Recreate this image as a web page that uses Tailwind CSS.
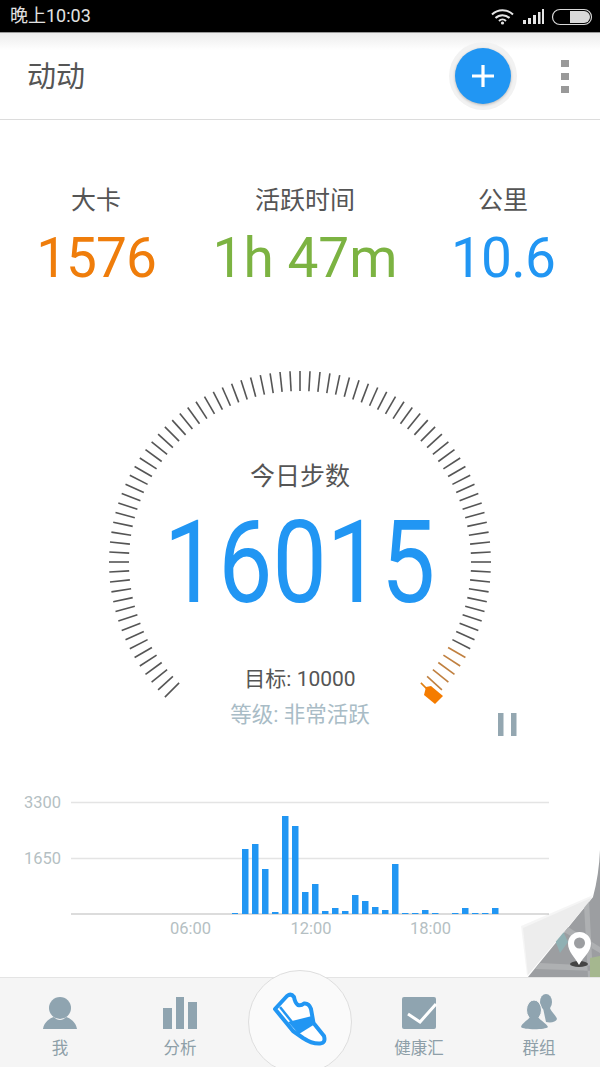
<!doctype html>
<html lang="zh">
<head>
<meta charset="utf-8">
<script src="https://cdn.jsdelivr.net/npm/@tailwindcss/browser@4"></script>
</head>
<body class="m-0 bg-white">
<div class="relative w-[600px] h-[1067px] overflow-hidden flex flex-col bg-white font-['Roboto','Noto_Sans_CJK_SC',sans-serif]">

  <!-- status bar -->
  <div class="h-[33px] shrink-0 bg-black border-b border-[#999] flex items-center justify-between pl-[10px]">
    <span class="text-[18px] text-[#e2e2e2] leading-none">晚上10:03</span>
    <svg width="110" height="24" viewBox="490 4 110 24" fill="none">
      <path d="M492 14.500a15 15 0 0 1 21 0M495.500 18a10 10 0 0 1 14 0M499 21a5 5 0 0 1 7 0" stroke="#e6e6e6" stroke-width="2"/>
      <circle cx="502.500" cy="23" r="1.600" fill="#e6e6e6"/>
      <path d="M523 20h3v4h-3zM528 18h3v6h-3zM533 15h3v9h-3zM538 12h2.500v12H538zM542 9h2v15h-2z" fill="#e6e6e6"/>
      <rect x="552.500" y="9.500" width="39" height="15" rx="7.500" stroke="#d8d8d8" stroke-width="1.200"/>
      <path d="M570 11h14a6 6 0 0 1 0 12h-14z" fill="#d8d8d8"/>
    </svg>
  </div>

  <!-- header -->
  <header class="relative h-[87px] shrink-0 border-b border-[#dcdcdc] bg-linear-to-b from-[#ececec] via-white via-[20%] to-white flex items-center pl-[27px] pr-[31px]">
    <h1 class="text-[29px] leading-none text-[#555] font-normal mt-[3px]">动动</h1>
    <div class="ml-auto mr-[44px] w-[68px] h-[68px] rounded-full bg-[#f2f2f2] flex items-center justify-center">
      <div class="w-[56px] h-[56px] rounded-full bg-[#2196f3] shadow-[0_1px_3px_rgba(0,0,0,0.25)] flex items-center justify-center">
        <svg width="24" height="24" viewBox="0 0 24 24"><path d="M12 1v22M1 12h22" stroke="#fff" stroke-width="3.200"/></svg>
      </div>
    </div>
    <div class="flex flex-col gap-[6px]">
      <span class="w-[8px] h-[7px] bg-[#999]"></span>
      <span class="w-[8px] h-[7px] bg-[#999]"></span>
      <span class="w-[8px] h-[7px] bg-[#999]"></span>
    </div>
  </header>

  <!-- stats -->
  <section class="h-[170px] shrink-0 flex pt-[65px] text-center">
    <div class="w-[192px]">
      <div class="text-[25px] leading-[32px] text-[#555]">大卡</div>
      <div class="mt-[8px] text-[55px] leading-[66px] text-[#ef7d0b] tracking-[-1px]">1576</div>
    </div>
    <div class="w-[226px]">
      <div class="text-[25px] leading-[32px] text-[#555]">活跃时间</div>
      <div class="mt-[8px] text-[55px] leading-[66px] text-[#7cb342]">1h 47m</div>
    </div>
    <div class="w-[170px]">
      <div class="text-[25px] leading-[32px] text-[#555]">公里</div>
      <div class="mt-[8px] text-[55px] leading-[66px] text-[#2196f3] tracking-[-0.75px]">10.6</div>
    </div>
  </section>

  <!-- gauge -->
  <section class="relative h-[480px] shrink-0 pt-[171px] flex flex-col items-center">
    <svg id="gauge" class="absolute left-0 top-0" width="600" height="480" viewBox="0 290 600 480" fill="none">
      <g id="ticks" stroke-width="1.600"></g>
      <path d="M424 695l2-8 5-1 12 10-8 8z" fill="#f57c00"/>
      <rect x="498" y="713" width="5.500" height="23" fill="#94a7b1"/>
      <rect x="511" y="713" width="5.500" height="23" fill="#94a7b1"/>
    </svg>
    <div class="relative text-[25px] leading-[32px] text-[#555]">今日步数</div>
    <div class="relative mt-[10px] text-[115px] leading-[120px] text-[#2196f3] scale-x-[0.84]">16015</div>
    <div class="relative mt-[42px] text-[21px] leading-[28px] text-[#555]">目标: 10000</div>
    <div class="relative mt-[8px] text-[21.500px] leading-[28px] text-[#a9bcc6]">等级: 非常活跃</div>
  </section>

  <!-- chart -->
  <section class="h-[207px] shrink-0">
    <svg width="600" height="207" viewBox="0 770 600 207">
      <path d="M71 802.500H549M71 858.500H549" stroke="#e4e4e4" stroke-width="1.500"/>
      <path d="M71 914H549" stroke="#dcdcdc" stroke-width="2"/>
      <g fill="#2196f3">
        <rect x="232" y="913" width="6" height="1"/><rect x="242" y="849" width="6.500" height="65"/><rect x="252" y="844" width="6.500" height="70"/><rect x="262" y="869" width="6.500" height="45"/><rect x="272" y="912" width="6.500" height="2"/><rect x="282" y="816" width="6.500" height="98"/><rect x="292" y="826" width="6.500" height="88"/><rect x="302" y="892" width="6.500" height="22"/><rect x="312" y="884" width="6.500" height="30"/><rect x="322" y="911" width="6.500" height="3"/><rect x="332" y="908" width="6.500" height="6"/><rect x="342" y="911" width="6.500" height="3"/><rect x="352" y="895" width="6.500" height="19"/><rect x="362" y="901" width="6.500" height="13"/><rect x="372" y="907" width="6.500" height="7"/><rect x="382" y="910" width="6.500" height="4"/><rect x="392" y="864" width="6.500" height="50"/><rect x="402" y="913" width="6.500" height="1"/><rect x="412" y="913" width="6.500" height="1"/><rect x="422" y="910" width="6.500" height="4"/><rect x="432" y="913" width="6.500" height="1"/><rect x="452" y="913" width="6.500" height="1"/><rect x="462" y="908" width="6.500" height="6"/><rect x="472" y="913" width="6.500" height="1"/><rect x="482" y="913" width="6.500" height="1"/><rect x="492" y="908" width="6.500" height="6"/>
      </g>
      <g fill="#b5bfc3" font-size="16.500" font-family="Roboto, sans-serif">
        <text x="61" y="808" text-anchor="end">3300</text>
        <text x="61" y="864" text-anchor="end">1650</text>
        <text x="190.500" y="934" text-anchor="middle">06:00</text>
        <text x="311" y="934" text-anchor="middle">12:00</text>
        <text x="430.500" y="934" text-anchor="middle">18:00</text>
      </g>
    </svg>
  </section>

  <!-- map corner curl -->
  <svg class="absolute right-0 top-[840px]" width="90" height="137" viewBox="510 840 90 137">
    <path d="M528 977L593 897Q599 875 600 850V977Z" fill="#9c9ea1"/>
    <path d="M568 927L600 947V953L564 932ZM540 963L600 966V971L535 969ZM584 905L588 977H593L589 900Z" fill="#aeb0b2"/>
    <path d="M555 940L563 931L568 942L560 953Z" fill="#8fb0b3"/>
    <path d="M590 977V958L600 956V977Z" fill="#a5b78f"/>
    <path d="M521 926L593 895L527 976Z" fill="#000" opacity=".04"/>
    <path d="M523 928L593 897L528 975Z" fill="#ededed"/>
    <ellipse cx="579" cy="964" rx="9" ry="3" fill="#444"/>
    <path d="M579 965C575 957 568 952 568 943.500A11 11 0 0 1 591 943.500C591 952 583 957 579 965Z" fill="#fff"/>
    <circle cx="579.500" cy="943" r="5.500" fill="#9c9ea1"/>
  </svg>

  <!-- bottom nav -->
  <nav class="relative flex-1 bg-[#f5f5f5] border-t border-[#e4e4e4] flex text-[16.500px] leading-[20px] text-[#8e9fa8] text-center">
    <div class="w-[120px] pt-[15px] flex flex-col items-center">
      <svg width="40" height="40" viewBox="40 993 40 40">
        <circle cx="60" cy="1008" r="11" fill="#8fa4b0"/>
        <path d="M43 1029C44 1022 50 1018 54 1017C57 1021 63 1021 66 1017C70 1018 76 1022 77 1029Z" fill="#8fa4b0"/>
      </svg>
      <span class="mt-[6px]">我</span>
    </div>
    <div class="w-[120px] pt-[15px] flex flex-col items-center">
      <svg width="40" height="40" viewBox="160 993 40 40">
        <path d="M163 1008h9v21h-9zM176 997h8v32h-8zM188 1002h9v27h-9z" fill="#8fa4b0"/>
      </svg>
      <span class="mt-[6px]">分析</span>
    </div>
    <div class="relative w-[120px]">
      <div class="absolute left-[8px] -top-[8px] w-[104px] h-[104px] rounded-full bg-[#fafafa] border border-[#dedede] flex items-center justify-center">
        <svg width="60" height="60" viewBox="270 992 60 60" fill="none">
          <path d="M275 1009L287 996Q291 993 294 997Q295 1003 298 1005Q301 1006 304 1003.500Q309 1003 311 1009L313.500 1023L324 1036Q326 1043 320 1043.500Q312 1044 303 1038L293 1031Z" fill="#fff" stroke="#2196f3" stroke-width="4" stroke-linejoin="round"/>
          <path d="M280 1007L292 1022" stroke="#2196f3" stroke-width="2.500"/>
          <path d="M288 1022L312 1016L315 1024L299 1034Z" fill="#2196f3"/>
        </svg>
      </div>
    </div>
    <div class="w-[118px] pt-[15px] flex flex-col items-center">
      <svg width="40" height="40" viewBox="398 993 40 40">
        <rect x="401" y="997" width="34" height="32" rx="2" fill="#8fa4b0"/>
        <path d="M407 1014L419 1022L435 1004" stroke="#fff" stroke-width="3" fill="none"/>
      </svg>
      <span class="mt-[6px]">健康汇</span>
    </div>
    <div class="w-[122px] pt-[15px] flex flex-col items-center">
      <svg width="40" height="40" viewBox="519 993 40 40">
        <ellipse cx="546" cy="1002" rx="6" ry="8" fill="#8fa4b0"/>
        <path d="M543 1008H550C551 1012 556 1015 557 1019C556 1022 551 1023 546 1022Z" fill="#8fa4b0"/>
        <ellipse cx="534" cy="1010" rx="7.500" ry="10" fill="#8fa4b0" stroke="#f5f5f5"/>
        <path d="M521 1027C522 1023 527 1021 530 1017H538C541 1021 546 1023 548 1027C546 1030 523 1030 521 1027Z" fill="#8fa4b0"/>
      </svg>
      <span class="mt-[6px]">群组</span>
    </div>
  </nav>
</div>
<script>
  var g = document.getElementById('ticks'), s = '';
  for (var i = 0; i <= 90; i++) {
    var a = (225 - i * 3) * Math.PI / 180;
    var c = Math.cos(a), n = Math.sin(a);
    var col = i >= 85 ? '#c08040' : '#555555';
    if (i === 90) col = '#e07f10';
    s += '<line x1="' + (300 + 171 * c).toFixed(1) + '" y1="' + (562 - 171 * n).toFixed(1) + '" x2="' + (300 + 191 * c).toFixed(1) + '" y2="' + (562 - 191 * n).toFixed(1) + '" stroke="' + col + '"/>';
  }
  g.innerHTML = s;
</script>
</body>
</html>
